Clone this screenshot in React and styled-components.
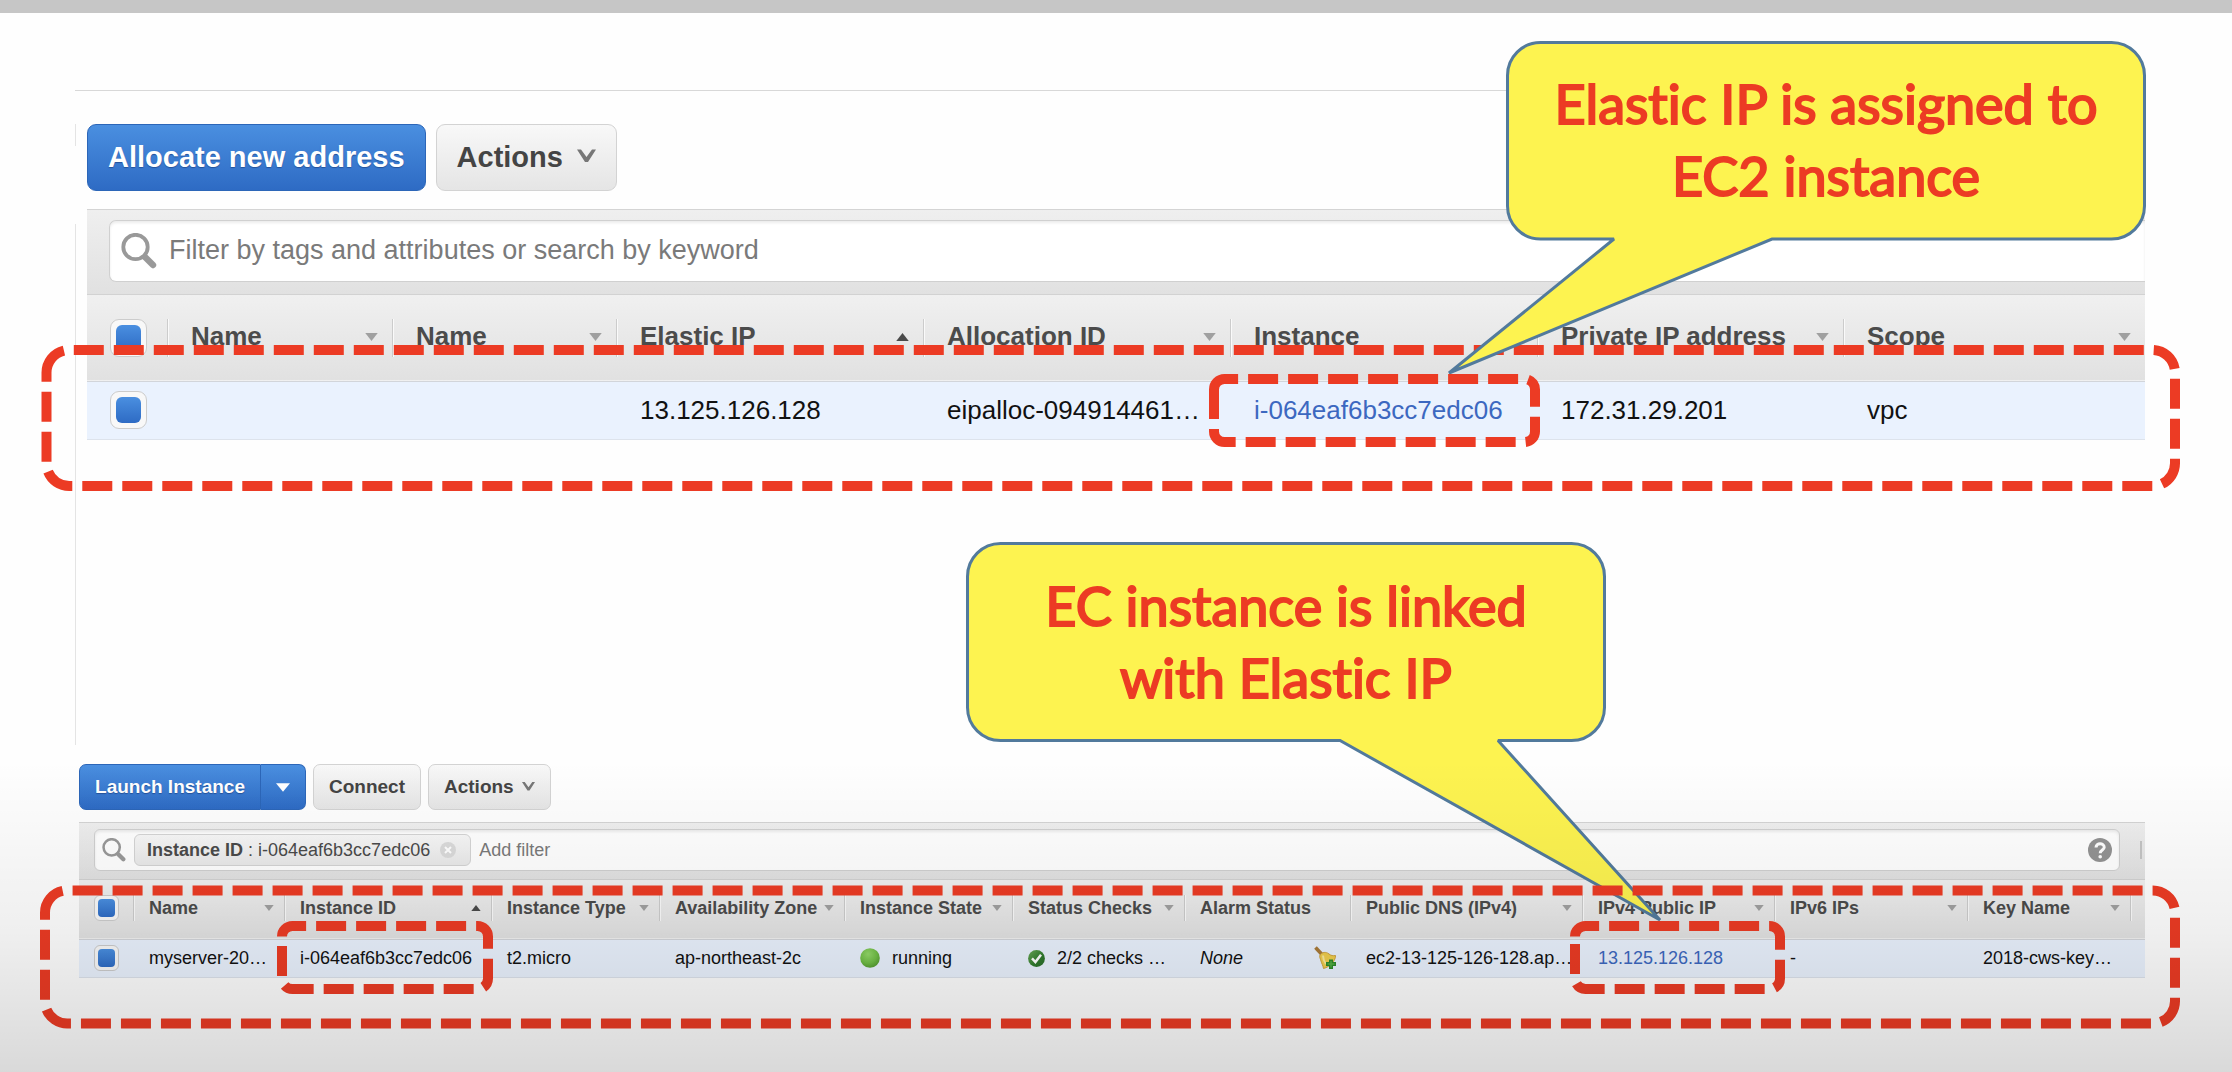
import React from "react";
import styled, { createGlobalStyle, css } from "styled-components";

const GlobalStyle = createGlobalStyle`
  * { box-sizing: border-box; }
  body {
    margin: 0;
    background: #ffffff;
    font-family: "Liberation Sans", Arial, sans-serif;
    color: #111111;
  }
  button, input { font-family: inherit; margin: 0; }
`;

const RED = "#ec3b24";

const Slide = styled.main`
  position: relative;
  display: flex;
  flex-direction: column;
  min-height: 1072px;
  overflow: hidden;
  background: #fefefe;
`;

const TopStrip = styled.div`
  height: 13px;
  background: #c6c6c6;
`;

const AddressPanel = styled.section`
  margin: 77px 87px 0 75px;
  padding: 33px 0 0 12px;
  min-height: 655px;
  border-top: 1px solid #d8d8d8;
  background:
    linear-gradient(#e4e4e4, #e4e4e4) 0 33px / 1px 22px no-repeat,
    linear-gradient(#e4e4e4, #e4e4e4) 0 133px / 1px 522px no-repeat;
`;

const InstancePanel = styled.section`
  margin: 19px 87px 0 79px;
`;

const Toolbar = styled.div`
  display: flex;
  gap: ${(p) => (p.$large ? "10px" : "7px")};
  margin-bottom: ${(p) => (p.$large ? "18px" : "12px")};
`;

const primary = css`
  border: 1px solid #2c66b8;
  background: linear-gradient(#4a8fe0, #2e6bc4);
  color: #ffffff;
  text-shadow: 0 1px 1px #24529a;
`;

const plain = css`
  border: 1px solid #d3d3d3;
  background: linear-gradient(#f8f8f8, #e5e5e5);
  color: #444444;
`;

const Button = styled.button`
  display: flex;
  align-items: center;
  justify-content: center;
  gap: ${(p) => (p.$large ? "14px" : "8px")};
  height: ${(p) => (p.$large ? "67px" : "46px")};
  padding: 0 ${(p) => (p.$large ? "20px" : "15px")};
  border-radius: ${(p) => (p.$large ? "9px" : "7px")};
  font-size: ${(p) => (p.$large ? "29px" : "19px")};
  font-weight: 700;
  white-space: nowrap;
  ${(p) => (p.$primary ? primary : plain)}
`;

const SplitButton = styled.div`
  display: flex;

  & > button:first-child {
    width: 182px;
    border-radius: 7px 0 0 7px;
  }
  & > button:last-child {
    width: 45px;
    border-left: 0;
    border-radius: 0 7px 7px 0;
  }
`;

const FilterBar = styled.div`
  display: flex;
  align-items: center;
  border-top: 1px solid #d4d4d4;
  border-bottom: 1px solid #d2d2d2;
  background: linear-gradient(#efefef, #e1e1e1);
  height: ${(p) => (p.$large ? "86px" : "58px")};
  padding: ${(p) => (p.$large ? "0 0 3px 22px" : "0 3px 2px 15px")};
`;

const SearchBox = styled.label`
  display: flex;
  align-items: center;
  flex: 1;
  min-width: 0;
  background: #ffffff;
  border: 1px solid #d0d0d0;
  box-shadow: inset 0 2px 3px rgba(0, 0, 0, 0.08);
  ${(p) =>
    p.$large
      ? css`
          height: 62px;
          padding-left: 11px;
          gap: 12px;
          border-right: 0;
          border-radius: 7px 0 0 7px;
        `
      : css`
          height: 42px;
          padding: 0 7px;
          gap: 8px;
          border-radius: 6px;
        `}
`;

const SearchInput = styled.input`
  flex: 1;
  min-width: 0;
  padding: 0;
  border: 0;
  outline: 0;
  background: transparent;
  font-size: ${(p) => (p.$large ? "27px" : "18px")};
  color: #444444;

  &::placeholder {
    color: #7a7a7a;
    opacity: 1;
  }
`;

const FilterTag = styled.span`
  display: flex;
  align-items: center;
  height: 32px;
  padding: 0 14px 0 12px;
  border: 1px solid #d4d4d4;
  border-radius: 6px;
  background: linear-gradient(#f7f7f7, #e9e9e9);
  color: #4a4a4a;
  font-size: 18px;
  white-space: pre;
`;

const ClearButton = styled.button`
  display: flex;
  margin-left: 10px;
  padding: 0;
  border: 0;
  background: none;
`;

const HelpButton = styled.button`
  display: flex;
  padding: 0;
  border: 0;
  background: none;
`;

const Divider = styled.span`
  width: 2px;
  height: 18px;
  margin-left: 20px;
  background: #c4c4c4;
`;

const Table = styled.table`
  width: 100%;
  table-layout: fixed;
  border-collapse: collapse;
  font-size: ${(p) => (p.$large ? "26px" : "18px")};
`;

const HeadRow = styled.tr`
  height: ${(p) => (p.$large ? "86px" : "59px")};
  background: linear-gradient(#f0f0f0, #e1e1e1);
  border-bottom: 1px solid #d2d5da;
`;

const HeadCell = styled.th`
  padding: ${(p) => (p.$large ? "0" : "0 0 2px")};
  text-align: left;
`;

const HeadInner = styled.div`
  display: flex;
  align-items: center;
  justify-content: space-between;
  white-space: nowrap;
  color: #4b4b4b;
  height: ${(p) => (p.$large ? "38px" : "26px")};
  padding: ${(p) =>
    p.$select ? "0" : p.$large ? "0 14px 2px 23px" : "0 10px 0 15px"};
  border-right: ${(p) => (p.$last ? "0" : "1px solid #cccccc")};
  box-shadow: ${(p) => (p.$last ? "none" : "1px 0 0 #fafafa")};
`;

const BodyRow = styled.tr`
  height: ${(p) => (p.$large ? "58px" : "38px")};
  background: #eaf2fe;
  border-bottom: 1px solid #dde3ec;
`;

const SelectCell = styled.td`
  padding: 0;
`;

const BodyCell = styled.td`
  padding: ${(p) => (p.$large ? "0 0 0 23px" : "0 0 0 15px")};
  overflow: hidden;
  white-space: nowrap;
`;

const CellRow = styled.span`
  display: flex;
  align-items: center;
  gap: ${(p) => p.$gap || 0}px;
  justify-content: ${(p) => (p.$spread ? "space-between" : "flex-start")};
  padding-right: ${(p) => (p.$spread ? "14px" : "0")};
`;

const CellLink = styled.a`
  color: #3c68c0;
  text-decoration: none;
`;

const CheckBox = styled.input.attrs({ type: "checkbox", defaultChecked: true })`
  appearance: none;
  display: flex;
  align-items: stretch;
  margin: 0 0 0 ${(p) => (p.$large ? "23px" : "15px")};
  width: ${(p) => (p.$large ? "37px" : "25px")};
  height: ${(p) => (p.$large ? "38px" : "26px")};
  padding: ${(p) => (p.$large ? "5px" : "3px")};
  border: 1px solid #cccccc;
  border-radius: ${(p) => (p.$large ? "9px" : "6px")};
  background: #f8f8f8;

  &:checked::before {
    content: "";
    flex: 1;
    border-radius: ${(p) => (p.$large ? "6px" : "4px")};
    background: linear-gradient(#4a8fe0, #2e6bc4);
  }
`;

const Shade = styled.div`
  position: absolute;
  inset: 760px 0 0;
  pointer-events: none;
  background: linear-gradient(
    rgba(0, 0, 0, 0) 0,
    rgba(0, 0, 0, 0.03) 90px,
    rgba(0, 0, 0, 0.06) 170px,
    rgba(0, 0, 0, 0.09) 225px,
    rgba(0, 0, 0, 0.145) 312px
  );
`;

const Overlay = styled.svg`
  position: absolute;
  top: 0;
  left: 0;
  pointer-events: none;
`;

const CalloutText = styled.p`
  position: absolute;
  left: ${(p) => p.$left}px;
  top: ${(p) => p.$top}px;
  display: flex;
  flex-direction: column;
  align-items: center;
  justify-content: center;
  width: 638px;
  height: 198px;
  margin: 0;
  color: ${RED};
  font-family: Lato, "Open Sans", sans-serif;
  font-size: 54px;
  font-weight: 400;
  -webkit-text-stroke: 2px ${RED};
  font-variant-ligatures: none;
  line-height: 72px;
  white-space: nowrap;
`;

const SearchIcon = ({ size }) => (
  <svg width={size} height={size} viewBox="0 0 36 36" fill="none" stroke="#999999" aria-hidden="true">
    <circle cx="14.5" cy="14" r="12.2" strokeWidth="3.8" />
    <path d="M24 24 L32 32" strokeWidth="6.4" strokeLinecap="round" />
  </svg>
);

const ChevronIcon = ({ large }) => (
  <svg width={large ? 19 : 13} height={large ? 19 : 13} viewBox="0 0 19 19" aria-hidden="true">
    <path d="M0 1.5 H4 L9.5 9 L15 1.5 H19 L11 14 H8 Z" fill="#777777" />
  </svg>
);

const SortIcon = ({ large, up }) => (
  <svg width={large ? 13 : 10} height={large ? 8 : 6} viewBox="0 0 14 9" aria-hidden="true">
    <path d={up ? "M0 9 L7 0 L14 9 Z" : "M0 0 H14 L7 9 Z"} fill={up ? "#4a4a4a" : "#a0a0a0"} />
  </svg>
);

const CaretIcon = () => (
  <svg width="15" height="9" viewBox="0 0 15 9" aria-hidden="true">
    <path d="M0 0 H15 L7.5 9 Z" fill="#ffffff" />
  </svg>
);

const ClearIcon = () => (
  <svg width="16" height="16" viewBox="0 0 16 16" aria-hidden="true">
    <circle cx="8" cy="8" r="8" fill="#dadada" />
    <path d="M5 5 L11 11 M11 5 L5 11" stroke="#ffffff" strokeWidth="2" />
  </svg>
);

const HelpIcon = () => (
  <svg width="24" height="24" viewBox="0 0 24 24" aria-hidden="true">
    <circle cx="12" cy="12" r="12" fill="#939393" />
    <path
      d="M8 9.4 C8 4.6 16.2 4.6 16.2 9.2 C16.2 12 12.2 12 12.2 15.2"
      fill="none"
      stroke="#ffffff"
      strokeWidth="3"
    />
    <circle cx="12.2" cy="18.8" r="1.8" fill="#ffffff" />
  </svg>
);

const RunningIcon = () => (
  <svg width="20" height="20" viewBox="0 0 20 20" aria-hidden="true">
    <defs>
      <radialGradient id="running" cx="0.4" cy="0.3" r="0.75">
        <stop offset="0" stopColor="#94d96a" />
        <stop offset="0.6" stopColor="#70be46" />
        <stop offset="1" stopColor="#52992f" />
      </radialGradient>
    </defs>
    <circle cx="10" cy="10" r="9.8" fill="url(#running)" />
  </svg>
);

const PassedIcon = () => (
  <svg width="17" height="17" viewBox="0 0 17 17" aria-hidden="true">
    <defs>
      <linearGradient id="passed" x1="0" y1="0" x2="1" y2="1">
        <stop offset="0" stopColor="#6cab58" />
        <stop offset="0.6" stopColor="#2f7a2c" />
        <stop offset="1" stopColor="#2a6a28" />
      </linearGradient>
    </defs>
    <circle cx="8.5" cy="8.5" r="8.4" fill="url(#passed)" />
    <path d="M4 8.4 L7.4 12 L13 4.8" fill="none" stroke="#ffffff" strokeWidth="2.5" />
  </svg>
);

const BellIcon = () => (
  <svg width="23" height="24" viewBox="0 0 23 24" aria-hidden="true">
    <path d="M1.5 1.5 L8 8.5" stroke="#a97b3a" strokeWidth="3.6" />
    <path
      d="M6 9 C8 6 12 5.5 15 8 C17 9.6 19 10 21.5 9.5 C22 14 16 21 9.5 22.5 C9 19 7.5 17.5 7 15 C6.5 12.5 5 11 6 9 Z"
      fill="#f0ce4c"
      stroke="#cfa33c"
      strokeWidth="1"
    />
    <path d="M9 9.5 C9 13 10.5 16 12 18" fill="none" stroke="#fbea9c" strokeWidth="2" />
    <path
      d="M15 13.5 H19 V16 H22 V20 H19 V23 H15 V20 H12 V16 H15 Z"
      fill="#2f8a2a"
    />
    <path d="M17 15 V21.5 M13.5 18 H20.5" stroke="#57b044" strokeWidth="1.4" />
  </svg>
);

// Rounded dashed frame; the outline starts below the top-left corner so dashes run clockwise from there.
const Frame = ({ left, top, right, bottom }) => {
  const r = Math.min(right - left, bottom - top) / 6;
  const d = [
    `M${left} ${top + r}`,
    `A${r} ${r} 0 0 1 ${left + r} ${top}`,
    `H${right - r}`,
    `A${r} ${r} 0 0 1 ${right} ${top + r}`,
    `V${bottom - r}`,
    `A${r} ${r} 0 0 1 ${right - r} ${bottom}`,
    `H${left + r}`,
    `A${r} ${r} 0 0 1 ${left} ${bottom - r}`,
    "Z",
  ].join(" ");
  return <path d={d} fill="none" stroke={RED} strokeWidth="10" strokeDasharray="30 10" />;
};

const Bubble = ({ left, top, right, bottom, tail }) => {
  const r = 33;
  const [from, tipX, tipY, to] = tail;
  const d = [
    `M${left + r} ${top}`,
    `H${right - r}`,
    `A${r} ${r} 0 0 1 ${right} ${top + r}`,
    `V${bottom - r}`,
    `A${r} ${r} 0 0 1 ${right - r} ${bottom}`,
    `H${to}`,
    `L${tipX} ${tipY}`,
    `L${from} ${bottom}`,
    `H${left + r}`,
    `A${r} ${r} 0 0 1 ${left} ${bottom - r}`,
    `V${top + r}`,
    `A${r} ${r} 0 0 1 ${left + r} ${top}`,
    "Z",
  ].join(" ");
  return <path d={d} fill="#fdf350" stroke="#527a9c" strokeWidth="3" strokeMiterlimit="2" />;
};

const addressColumns = [
  { label: "Name", width: 225 },
  { label: "Name", width: 224 },
  { label: "Elastic IP", width: 307, up: true },
  { label: "Allocation ID", width: 307 },
  { label: "Instance", width: 307 },
  { label: "Private IP address", width: 306 },
  { label: "Scope", width: 301 },
];

const addressCells = [
  "",
  "",
  "13.125.126.128",
  "eipalloc-094914461…",
  <CellLink href="#instance">i-064eaf6b3cc7edc06</CellLink>,
  "172.31.29.201",
  "vpc",
];

const instanceColumns = [
  { label: "Name", width: 151 },
  { label: "Instance ID", width: 207, up: true },
  { label: "Instance Type", width: 168 },
  { label: "Availability Zone", width: 185 },
  { label: "Instance State", width: 168 },
  { label: "Status Checks", width: 172 },
  { label: "Alarm Status", width: 166, unsorted: true },
  { label: "Public DNS (IPv4)", width: 232 },
  { label: "IPv4 Public IP", width: 192 },
  { label: "IPv6 IPs", width: 193 },
  { label: "Key Name", width: 163 },
  { label: "", width: 14, unsorted: true },
];

const instanceCells = [
  "myserver-20…",
  "i-064eaf6b3cc7edc06",
  "t2.micro",
  "ap-northeast-2c",
  <CellRow $gap={12}><RunningIcon />running</CellRow>,
  <CellRow $gap={12}><PassedIcon />2/2 checks …</CellRow>,
  <CellRow $spread><em>None</em><BellIcon /></CellRow>,
  "ec2-13-125-126-128.ap…",
  <CellLink href="#address">13.125.126.128</CellLink>,
  "-",
  "2018-cws-key…",
  "",
];

const DataTable = ({ large, selectWidth, columns, cells }) => (
  <Table $large={large}>
    <colgroup>
      <col width={selectWidth} />
      {columns.map((c, i) => (
        <col key={i} width={c.width} />
      ))}
    </colgroup>
    <thead>
      <HeadRow $large={large}>
        <HeadCell $large={large}>
          <HeadInner $large={large} $select>
            <CheckBox $large={large} aria-label="Select all" />
          </HeadInner>
        </HeadCell>
        {columns.map((c, i) => (
          <HeadCell key={i} $large={large}>
            <HeadInner $large={large} $last={i === columns.length - 1}>
              {c.label}
              {!c.unsorted && <SortIcon large={large} up={c.up} />}
            </HeadInner>
          </HeadCell>
        ))}
      </HeadRow>
    </thead>
    <tbody>
      <BodyRow $large={large}>
        <SelectCell>
          <CheckBox $large={large} aria-label="Select row" />
        </SelectCell>
        {cells.map((cell, i) => (
          <BodyCell key={i} $large={large}>
            {cell}
          </BodyCell>
        ))}
      </BodyRow>
    </tbody>
  </Table>
);

export default function App() {
  return (
    <>
      <GlobalStyle />
      <Slide>
        <TopStrip />
        <AddressPanel>
          <Toolbar $large>
            <Button $large $primary>Allocate new address</Button>
            <Button $large>
              Actions <ChevronIcon large />
            </Button>
          </Toolbar>
          <FilterBar $large>
            <SearchBox $large>
              <SearchIcon size={36} />
              <SearchInput
                $large
                aria-label="Filter addresses"
                placeholder="Filter by tags and attributes or search by keyword"
              />
            </SearchBox>
          </FilterBar>
          <DataTable large selectWidth={81} columns={addressColumns} cells={addressCells} />
        </AddressPanel>

        <InstancePanel>
          <Toolbar>
            <SplitButton>
              <Button $primary>Launch Instance</Button>
              <Button $primary aria-label="Launch options">
                <CaretIcon />
              </Button>
            </SplitButton>
            <Button>Connect</Button>
            <Button>
              Actions <ChevronIcon />
            </Button>
          </Toolbar>
          <FilterBar>
            <SearchBox>
              <SearchIcon size={24} />
              <FilterTag>
                <b>Instance ID</b> : i-064eaf6b3cc7edc06
                <ClearButton aria-label="Remove filter">
                  <ClearIcon />
                </ClearButton>
              </FilterTag>
              <SearchInput aria-label="Add filter" placeholder="Add filter" />
              <HelpButton aria-label="Help">
                <HelpIcon />
              </HelpButton>
            </SearchBox>
            <Divider />
          </FilterBar>
          <DataTable selectWidth={55} columns={instanceColumns} cells={instanceCells} />
        </InstancePanel>

        <Overlay width="2232" height="1072" viewBox="0 0 2232 1072" aria-hidden="true">
          <Frame left={46.5} top={350} right={2175} bottom={486} />
          <Bubble left={1507.5} top={42.5} right={2144.5} bottom={239} tail={[1614, 1449, 373, 1772]} />
          <Frame left={1214} top={379} right={1535} bottom={442} />
          <Bubble left={967.5} top={543.5} right={1604.5} bottom={740.5} tail={[1340, 1660, 920, 1498]} />
          <Frame left={45} top={890.5} right={2175} bottom={1023.5} />
          <Frame left={282} top={926} right={488} bottom={989} />
          <Frame left={1575} top={926} right={1780} bottom={989} />
        </Overlay>
        <CalloutText $left={1507} $top={41}>
          <span>Elastic IP is assigned to</span>
          <span>EC2 instance</span>
        </CalloutText>
        <CalloutText $left={967} $top={543}>
          <span>EC instance is linked</span>
          <span>with Elastic IP</span>
        </CalloutText>
        <Shade />
      </Slide>
    </>
  );
}
